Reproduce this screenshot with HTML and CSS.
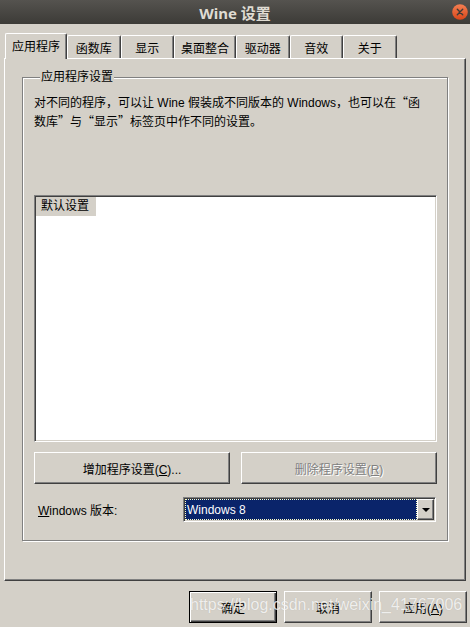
FILE: index.html
```html
<!DOCTYPE html>
<html lang="zh-CN">
  <head>
    <meta charset="UTF-8" />
    <meta name="viewport" content="width=device-width, initial-scale=1.0" />
    <title>Wine 设置</title>
    <link rel="stylesheet" href="styles.css">
  </head>
  <body>
    <div class="titlebar">
      <span class="title">Wine 设置</span>
      <span class="close">
        <svg width="16" height="16" viewBox="0 0 16 16">
          <defs>
            <linearGradient id="cg" x1="0" y1="0" x2="0" y2="1">
              <stop offset="0" stop-color="#f47f52" />
              <stop offset="1" stop-color="#d9461a" />
            </linearGradient>
          </defs>
          <circle cx="8" cy="8" r="7.8" fill="url(#cg)" />
          <path d="M5.3 5.3 L10.7 10.7 M10.7 5.3 L5.3 10.7" stroke="#3c3b37" stroke-width="1.4" stroke-linecap="round" />
        </svg>
      </span>
    </div>

    <div class="tabs">
      <div class="tab active">应用程序</div>
      <div class="tab">函数库</div>
      <div class="tab">显示</div>
      <div class="tab">桌面整合</div>
      <div class="tab">驱动器</div>
      <div class="tab">音效</div>
      <div class="tab">关于</div>
    </div>

    <div class="panel">
      <div class="group">
        <div class="legend">应用程序设置</div>
        <p class="desc">对不同的程序，可以让 Wine 假装成不同版本的 Windows，也可以在<span class="q">“</span>函数库<span class="q">”</span>与<span class="q">“</span>显示<span class="q">”</span>标签页中作不同的设置。</p>

        <div class="list">
          <div class="item">默认设置</div>
        </div>

        <div class="buttons">
          <button class="btn">增加程序设置(<u>C</u>)...</button>
          <button class="btn" disabled>删除程序设置(<u>R</u>)</button>
        </div>

        <div class="version">
          <label class="version-label"><u>W</u>indows 版本:</label>
          <div class="combo">
            <span class="combo-value">Windows 8</span>
            <span class="combo-drop"><span class="arrow"></span></span>
          </div>
        </div>
      </div>
    </div>

    <div class="footer">
      <button class="btn default">确定</button>
      <button class="btn">取消</button>
      <button class="btn">应用(<u>A</u>)</button>
    </div>

    <div class="watermark">https://blog.csdn.net/weixin_41767006</div>
  </body>
</html>
```

FILE: styles.css
```css
body {
  margin: 0;
  width: 470px;
  height: 627px;
  overflow: hidden;
  position: relative;
  background: #d4d0c8;
  color: #000;
  font: 12px "Liberation Sans", "Noto Sans CJK SC", sans-serif;
}
.titlebar {
  height: 24px;
  background: linear-gradient(#55534f, #3c3b37);
  display: grid;
  grid-template-columns: 1fr auto 1fr;
  align-items: center;
}
.title {
  grid-column: 2;
  font: bold 15px "Noto Sans", "Noto Sans CJK SC", sans-serif;
  color: #dfdbd2;
}
.close {
  justify-self: end;
  margin-right: 2px;
  display: flex;
}
.tabs {
  display: flex;
  align-items: flex-end;
  height: 25px;
  margin-top: 9px;
  padding-left: 5px;
}
.tab {
  box-sizing: border-box;
  height: 23px;
  min-width: 53.5px;
  padding: 0 6px;
  display: flex;
  align-items: center;
  justify-content: center;
  border-top: 1px solid #fff;
  border-left: 1px solid #fff;
  border-right: 1px solid #404040;
  border-radius: 2px 2px 0 0;
  box-shadow: inset -1px 0 #808080;
  font-family: "Noto Sans CJK SC", sans-serif;
}
.tab.active {
  position: relative;
  z-index: 1;
  height: 26px;
  width: 62px;
  margin-bottom: -1px;
  padding-bottom: 2px;
  background: #d4d0c8;
}
.panel {
  box-sizing: border-box;
  height: 523px;
  margin: 0 4px;
  padding: 18px 0 0 17px;
  border: 1px solid;
  border-color: #fff #404040 #404040 #fff;
  box-shadow: inset -1px -1px #808080;
}
.group {
  box-sizing: border-box;
  width: 426px;
  height: 464px;
  padding: 0 10px 0 11px;
  border: 1px solid #808080;
  box-shadow: inset 1px 1px #fff, 1px 1px #fff;
}
.legend {
  display: table;
  margin: -8px 0 0 6px;
  padding: 0 1px;
  line-height: 15px;
  background: #d4d0c8;
}
.desc {
  width: 392px;
  height: 38px;
  margin: 9px 0 0;
  line-height: 19px;
}
.q {
  font-family: "Noto Sans CJK SC", sans-serif;
  line-height: 12px;
}
.list {
  box-sizing: border-box;
  height: 247px;
  margin-top: 63px;
  padding: 1px;
  background: #fff;
  border: 1px solid;
  border-color: #808080 #fff #fff #808080;
  box-shadow: inset 1px 1px #404040, inset -1px -1px #d4d0c8;
}
.item {
  display: table;
  padding: 0 7px 0 5px;
  line-height: 19px;
  background: #d4d0c8;
}
.btn {
  box-sizing: border-box;
  height: 32px;
  padding: 0;
  font: inherit;
  color: #000;
  background: #d4d0c8;
  border: 1px solid;
  border-color: #fff #404040 #404040 #fff;
  box-shadow: inset -1px -1px #808080;
}
.btn:disabled {
  color: #808080;
  text-shadow: 1px 1px #fff;
}
.btn.default {
  border-color: #000;
  box-shadow: inset 1px 1px #fff, inset -1px -1px #404040, inset -2px -2px #808080;
}
.buttons {
  display: flex;
  gap: 11px;
  margin-top: 10px;
}
.buttons .btn {
  width: 196px;
}
.version {
  display: flex;
  align-items: center;
  margin-top: 13px;
}
.version-label {
  width: 145px;
  padding-left: 4px;
}
.combo {
  box-sizing: border-box;
  display: flex;
  width: 253px;
  height: 25px;
  padding: 1px;
  border: 1px solid;
  border-color: #808080 #fff #fff #808080;
  box-shadow: inset 1px 1px #404040, inset -1px -1px #d4d0c8;
}
.combo-value {
  flex: 1;
  display: flex;
  align-items: center;
  padding-left: 1px;
  color: #fff;
  background: #0a246a;
  border: 1px dotted #ffffc8;
}
.combo-drop {
  box-sizing: border-box;
  width: 17px;
  display: flex;
  align-items: center;
  justify-content: center;
  background: #d4d0c8;
  border: 1px solid;
  border-color: #fff #404040 #404040 #fff;
  box-shadow: inset -1px -1px #808080;
}
.arrow {
  width: 0;
  height: 0;
  border-left: 4px solid transparent;
  border-right: 4px solid transparent;
  border-top: 4px solid #000;
}
.footer {
  display: flex;
  justify-content: flex-end;
  gap: 7px;
  margin-top: 10px;
  padding-right: 3px;
}
.footer .btn {
  width: 88px;
}
.watermark {
  position: absolute;
  left: 190px;
  top: 596px;
  font: 16px "Liberation Sans", sans-serif;
  color: rgba(255, 255, 255, 0.78);
  text-shadow: 0 0 1px rgba(0, 0, 0, 0.15);
  pointer-events: none;
}
```
